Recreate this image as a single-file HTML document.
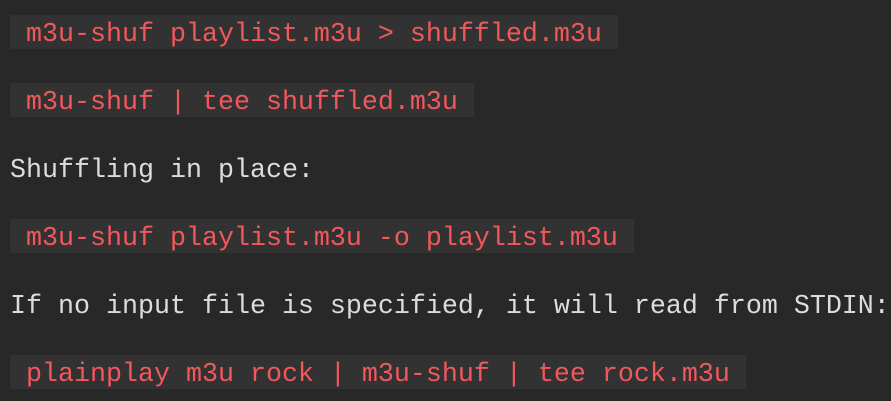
<!DOCTYPE html>
<html><head><style>
html,body{margin:0;padding:0;background:#282828;width:891px;height:401px;overflow:hidden}
.l{position:absolute;left:10px;font-family:"Liberation Mono",monospace;font-size:26.67px;line-height:40px;height:34px;overflow:hidden;white-space:pre}
.c{background:#323232;color:#f2575c}
.t{color:#dcdcdc}
</style></head><body>
<div class="l c" style="top:15px"> m3u-shuf playlist.m3u &gt; shuffled.m3u </div>
<div class="l c" style="top:83px"> m3u-shuf | tee shuffled.m3u </div>
<div class="l t" style="top:151px">Shuffling in place:</div>
<div class="l c" style="top:219px"> m3u-shuf playlist.m3u -o playlist.m3u </div>
<div class="l t" style="top:287px">If no input file is specified, it will read from STDIN:</div>
<div class="l c" style="top:355px"> plainplay m3u rock | m3u-shuf | tee rock.m3u </div>
</body></html>
